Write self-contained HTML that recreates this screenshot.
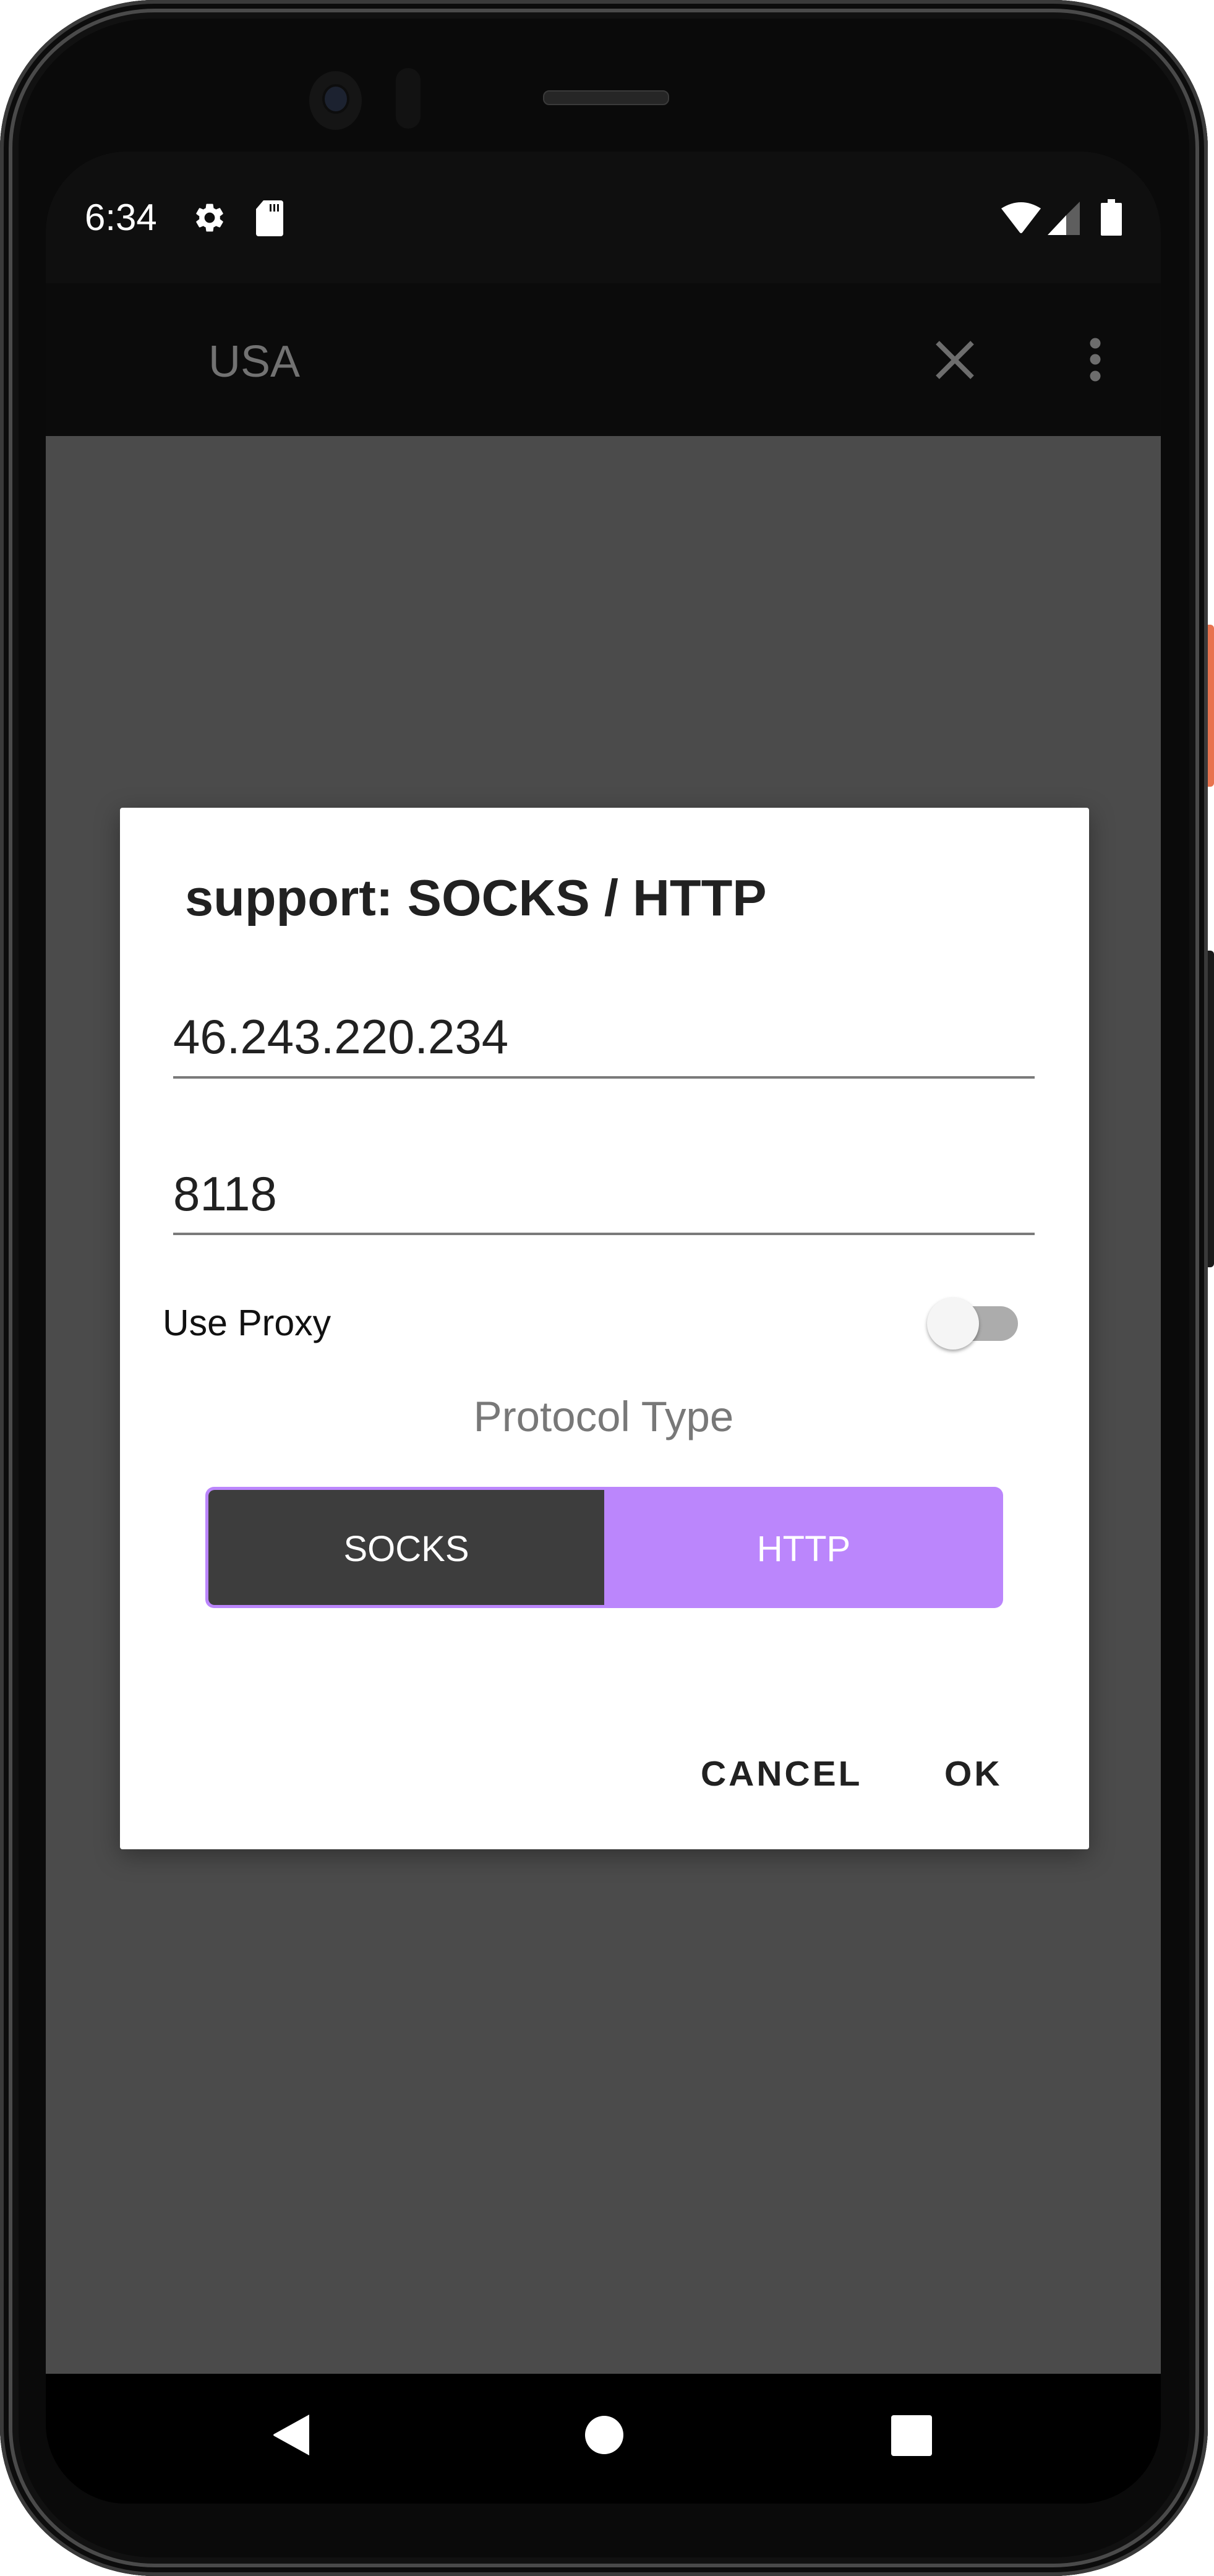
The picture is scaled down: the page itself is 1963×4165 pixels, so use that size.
<!DOCTYPE html>
<html><head><meta charset="utf-8"><style>
html,body{margin:0;padding:0;background:#fff;}
body{width:1963px;height:4165px;position:relative;overflow:hidden;font-family:"Liberation Sans",sans-serif;}
.abs{position:absolute;}
</style></head><body>
<div class="abs" style="left:1940px;top:1010px;width:23px;height:262px;background:#e8734f;border-radius:6px;"></div>
<div class="abs" style="left:1940px;top:1537px;width:23px;height:512px;background:#1a1a1a;border-radius:6px;"></div>
<div class="abs" style="left:0;top:0;width:1953px;height:4165px;background:#111;border-radius:250px/240px;box-shadow:inset 0 0 0 6px #3a3a3a,inset 0 0 0 14px #0c0c0c,inset 0 0 0 20px #4a4a4a;"></div>
<div class="abs" style="left:30px;top:30px;width:1893px;height:4105px;background:#0a0a0a;border-radius:220px/210px;"></div>
<div class="abs" style="left:500px;top:115px;width:85px;height:95px;border-radius:50%;background:#151515;"></div>
<div class="abs" style="left:525px;top:140px;width:36px;height:40px;border-radius:50%;background:#1c2230;box-shadow:0 0 0 4px #0d0d0d;"></div>
<div class="abs" style="left:640px;top:110px;width:40px;height:98px;border-radius:20px;background:#121212;"></div>
<div class="abs" style="left:878px;top:146px;width:200px;height:20px;border-radius:10px;background:#262626;border:2px solid #3a3a3a;"></div>
<div class="abs" style="left:74px;top:245px;width:1803px;height:3803px;border-radius:130px;overflow:hidden;background:#000;">
  <div class="abs" style="left:0;top:0;width:1803px;height:213px;background:#0f0f0f;"></div>
  <div class="abs" style="left:0;top:213px;width:1803px;height:247px;background:#0b0b0b;"></div>
  <div class="abs" style="left:0;top:460px;width:1803px;height:3133px;background:#4b4b4b;"></div>
  <div class="abs" style="left:0;top:3593px;width:1803px;height:210px;background:#000;"></div>
</div>
<div class="abs" style="left:137px;top:312px;font-size:60px;color:#fff;line-height:80px;">6:34</div>
<svg class="abs" style="left:311px;top:324px" width="56" height="56" viewBox="0 0 24 24"><path fill="#fff" d="M19.14 12.94c.04-.3.06-.61.06-.94 0-.32-.02-.64-.07-.94l2.03-1.580a.49.49 0 0 0 .12-.61l-1.92-3.32a.488.488 0 0 0-.59-.22l-2.39.96c-.5-.38-1.030-.7-1.62-.94l-.36-2.54a.484.484 0 0 0-.48-.41h-3.84c-.24 0-.43.17-.47.41l-.36 2.54c-.59.24-1.13.57-1.62.94l-2.39-.96c-.22-.08-.47 0-.59.22L2.74 8.87c-.12.21-.08.47.12.61l2.03 1.58c-.05.3-.09.63-.09.94s.02.64.07.94l-2.03 1.58a.49.49 0 0 0-.12.61l1.92 3.32c.12.22.37.29.59.22l2.39-.96c.5.38 1.03.7 1.62.94l.36 2.54c.05.24.24.41.48.41h3.84c.24 0 .44-.17.47-.41l.36-2.54c.59-.24 1.13-.56 1.62-.94l2.39.96c.22.08.47 0 .59-.22l1.92-3.32c.12-.22.07-.47-.12-.61l-2.01-1.58zM12 15.6c-1.98 0-3.6-1.62-3.6-3.6s1.62-3.6 3.6-3.6 3.6 1.62 3.6 3.6-1.62 3.6-3.6 3.6z"/></svg>
<svg class="abs" style="left:410px;top:322px" width="50" height="60" viewBox="0 0 50 60"><path fill="#fff" d="M16 2h28a4 4 0 0 1 4 4v50a4 4 0 0 1-4 4H8a4 4 0 0 1-4-4V16z"/><rect x="26" y="8" width="3" height="12" fill="#0f0f0f"/><rect x="32" y="8" width="3" height="12" fill="#0f0f0f"/><rect x="38" y="8" width="3" height="12" fill="#0f0f0f"/></svg>
<svg class="abs" style="left:1617px;top:323px" width="68" height="55" viewBox="0 0 68 55"><path fill="#fff" d="M2 14Q34 -6 66 14L36 53Q34 55 32 53Z"/></svg>
<svg class="abs" style="left:1694px;top:326px" width="53" height="54" viewBox="0 0 53 54"><path fill="#fff" d="M0 54L30 22V54Z"/><path fill="#5e5e5e" d="M30 22L52 0V54H30Z"/></svg>
<svg class="abs" style="left:1780px;top:322px" width="34" height="59" viewBox="0 0 34 59"><rect x="11" y="0" width="12" height="8" fill="#fff"/><rect x="0" y="6" width="34" height="53" rx="2" fill="#fff"/></svg>
<div class="abs" style="left:337px;top:540px;font-size:72px;color:#727272;line-height:90px;">USA</div>
<svg class="abs" style="left:1513px;top:551px" width="62" height="62" viewBox="0 0 62 62"><path d="M3 3L59 59M59 3L3 59" stroke="#6d6d6d" stroke-width="8"/></svg>
<svg class="abs" style="left:1761px;top:544px" width="20" height="76" viewBox="0 0 20 76"><circle cx="10" cy="11" r="8.5" fill="#6d6d6d"/><circle cx="10" cy="37" r="8.5" fill="#6d6d6d"/><circle cx="10" cy="64" r="8.5" fill="#6d6d6d"/></svg>
<div class="abs" style="left:194px;top:1306px;width:1567px;height:1684px;background:#fff;box-shadow:0 10px 40px rgba(0,0,0,.35);border-radius:4px;"></div>
<div class="abs" style="left:299px;top:1397px;font-size:83px;font-weight:bold;color:#212121;line-height:110px;white-space:nowrap;">support: SOCKS / HTTP</div>
<div class="abs" style="left:280px;top:1626px;font-size:78px;color:#212121;line-height:100px;">46.243.220.234</div>
<div class="abs" style="left:280px;top:1740px;width:1393px;height:4px;background:#7a7a7a;"></div>
<div class="abs" style="left:280px;top:1880px;font-size:78px;color:#212121;line-height:100px;">8118</div>
<div class="abs" style="left:280px;top:1993px;width:1393px;height:4px;background:#7a7a7a;"></div>
<div class="abs" style="left:263px;top:2101px;font-size:59px;color:#111;line-height:76px;">Use Proxy</div>
<div class="abs" style="left:1520px;top:2112px;width:126px;height:56px;border-radius:28px;background:#acacac;"></div>
<div class="abs" style="left:1499px;top:2098px;width:84px;height:84px;border-radius:50%;background:#f5f5f5;box-shadow:0 3px 6px rgba(0,0,0,.35);"></div>
<div class="abs" style="left:576px;top:2251px;width:800px;text-align:center;font-size:69px;color:#787878;line-height:80px;">Protocol Type</div>
<div class="abs" style="left:332px;top:2404px;width:1290px;height:196px;border-radius:14px;background:#bb86fc;overflow:hidden;">
  <div class="abs" style="left:5px;top:5px;width:640px;height:186px;background:#3d3d3d;border-radius:10px 0 0 10px;"></div>
  <div class="abs" style="left:5px;top:3px;width:640px;height:196px;line-height:196px;text-align:center;color:#fff;font-size:58px;">SOCKS</div>
  <div class="abs" style="left:645px;top:3px;width:645px;height:196px;line-height:196px;text-align:center;color:#fff;font-size:58px;">HTTP</div>
</div>
<div class="abs" style="left:1133px;top:2833px;font-size:57px;font-weight:bold;color:#212121;line-height:70px;letter-spacing:4px;">CANCEL</div>
<div class="abs" style="left:1527px;top:2833px;font-size:57px;font-weight:bold;color:#212121;line-height:70px;letter-spacing:4px;">OK</div>
<svg class="abs" style="left:440px;top:3902px" width="66" height="70" viewBox="0 0 66 70"><path fill="#fff" d="M60 2V68L4 37Q0 35 4 33Z"/></svg>
<div class="abs" style="left:946px;top:3906px;width:62px;height:62px;border-radius:50%;background:#fff;"></div>
<div class="abs" style="left:1441px;top:3905px;width:66px;height:66px;border-radius:4px;background:#fff;"></div>
</body></html>
